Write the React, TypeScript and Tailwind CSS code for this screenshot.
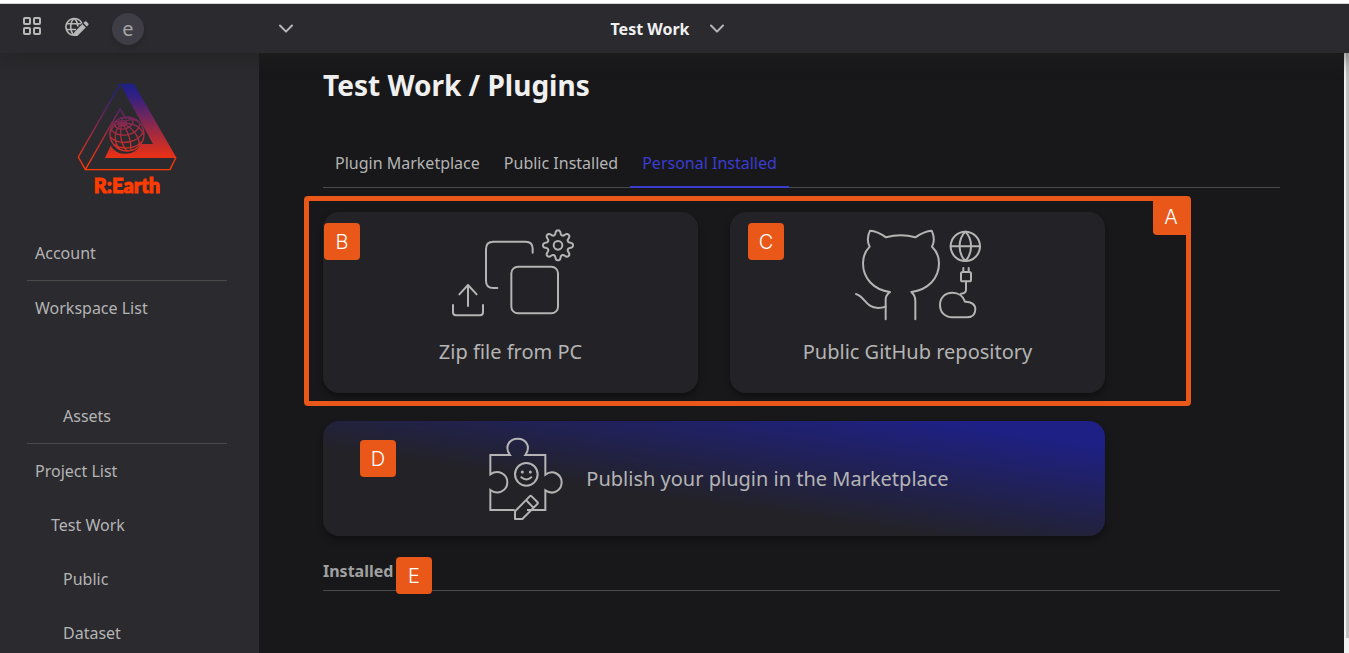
import type { ReactNode } from "react";

function Chevron() {
  return (
    <svg width="14" height="9" viewBox="0 0 14 9" fill="none" stroke="#b8b8b8" strokeWidth="2" strokeLinecap="round" strokeLinejoin="round" aria-hidden="true">
      <path d="M1 1.500 7 7.600 13 1.500" />
    </svg>
  );
}

function GridIcon() {
  return (
    <svg width="18" height="18" viewBox="0 0 18 18" fill="none" stroke="#b8b8b8" strokeWidth="2" aria-hidden="true">
      <rect x="1" y="1" width="6" height="6" rx="1" />
      <rect x="11" y="1" width="6" height="6" rx="1" />
      <rect x="1" y="11" width="6" height="6" rx="1" />
      <rect x="11" y="11" width="6" height="6" rx="1" />
    </svg>
  );
}

function GlobeEditIcon() {
  return (
    <svg width="24" height="20" viewBox="0 0 24 20" fill="none" stroke="#b8b8b8" strokeWidth="1.6" aria-hidden="true">
      <path d="M17 6.500A8.400 8.400 0 1 0 9 18.300" />
      <path d="M9 1.500C4.600 5.500 4.600 14 9 18.200" />
      <path d="M9.400 1.500C11.600 3.600 12.800 6.400 12.900 9.500" />
      <path d="M1.600 6.700H16M1.200 12.500H11" />
      <path d="M9 19v-3.500L17.400 7.100l3.400 3.400L12.300 19z" fill="#b8b8b8" stroke="none" />
      <path d="M18.400 6.100l1.500-1.500a1 1 0 0 1 1.400 0l2 2a1 1 0 0 1 0 1.400l-1.500 1.500z" fill="#b8b8b8" stroke="none" />
    </svg>
  );
}

function Logo() {
  return (
    <svg width="100" height="88" viewBox="51 40 300 264" fill="none" role="img" aria-label="R:Earth logo">
      <defs>
        <linearGradient id="earth" gradientUnits="userSpaceOnUse" x1="0" y1="42" x2="0" y2="301">
          <stop offset="0" stopColor="#1e2086" />
          <stop offset="0.12" stopColor="#2c2085" />
          <stop offset="0.82" stopColor="#e2301a" />
          <stop offset="1" stopColor="#ff3c00" />
        </linearGradient>
      </defs>
      <path d="M180 42H222L348 262V265H135L152 228A52 52 0 0 0 243 223H279Z" fill="url(#earth)" />
      <g stroke="url(#earth)" strokeWidth="4.2">
        <path d="M180 43 55 262 76 300H330L348 263" />
        <path d="M76 300 180 118 198 148" />
        <circle cx="201" cy="193" r="51" />
        <path d="M187 161C163 161 151 178 150 193M187 161C160 180 160 215 179 239M187 161C175 190 184 226 201 244M187 161C202 182 214 212 213 242M187 161C220 174 238 202 238 227M187 161C222 158 246 174 251 196M187 161C205 146 224 148 235 155M187 161C182 149 188 144 196 142M187 161C172 153 163 158 159 164" />
        <ellipse cx="187" cy="161" rx="13" ry="8" />
        <path d="M164 158C158 187 214 184 219 157C219 146 203 144 195 145" />
        <path d="M153 179C171 207 231 201 240 163" />
        <path d="M151 201C172 231 241 220 250 183" />
        <path d="M162 224C184 242 228 237 246 216" />
      </g>
    </svg>
  );
}

const gearPath =
  Array.from({ length: 160 }, (_, i) => {
    const a = (i / 160) * Math.PI * 2;
    const r = 38.5 + 6.5 * (Math.tanh(1.4 * Math.cos(8 * a)) / Math.tanh(1.4));
    return `${i ? "L" : "M"}${(384 + r * Math.cos(a)).toFixed(2)} ${(121 + r * Math.sin(a)).toFixed(2)}`;
  }).join("") + "Z";

const line = {
  fill: "none",
  stroke: "#b4b4b4",
  strokeWidth: 6,
  strokeLinecap: "round" as const,
  strokeLinejoin: "round" as const,
  "aria-hidden": true,
};

function ZipArt() {
  return (
    <svg width="128" height="92" viewBox="51 72 384 276" {...line}>
      <path d="M308 143V131Q308 110 287 110H190Q168 110 168 132V227Q168 249 190 249H202" />
      <rect x="244" y="185" width="140" height="140" rx="20" />
      <path d="M114 303V240M88 268 114 240 140 268M69 300V322Q69 331 78 331H150Q159 331 159 322V300" />
      <path d={gearPath} />
      <circle cx="384" cy="121" r="13" />
    </svg>
  );
}

function GithubArt() {
  return (
    <svg width="128" height="92" viewBox="42 42 384 276" {...line}>
      <path d="M137 313V253Q137 241 150 231C101 225 69 190 69 145C69 125 76 108 89 95C82 82 82 64 90 47C108 48 123 56 138 67Q182 55 226 67C242 56 258 48 275 47C283 64 283 82 276 95C290 108 297 125 297 145C297 190 264 225 214 231Q226 241 226 257V313" />
      <path d="M48 237C75 245 78 279 114 279Q126 279 137 275" />
      <circle cx="376" cy="94" r="44" />
      <path d="M332 94H420M376 50C353 73 353 115 376 138M376 50C399 73 399 115 376 138" />
      <rect x="363" y="171" width="30" height="28" rx="5" />
      <path d="M370 170V159M386 170V159M378 200V224Q378 235 363 236" />
      <path d="M337 307H381C398 307 406 296 406 283C406 269 394 259 375 260C370 243 355 233 337 233C315 233 300 248 300 270C300 292 315 307 337 307Z" />
    </svg>
  );
}

function PuzzleArt() {
  return (
    <svg width="84" height="83" viewBox="30 36 252 249" {...line} strokeLinejoin="miter" strokeLinecap="butt">
      <path d="M137 255H64V195C87 212 115 197 115 172C115 147 87 132 64 148V90H123C106 67 119 41 146 41C173 41 186 67 169 90H229V149C252 132 278 149 278 172C278 197 252 212 229 196V255H174" />
      <circle cx="172" cy="148" r="34" />
      <path d="M157 157Q172 170 187 157" strokeLinecap="round" />
      <circle cx="160" cy="141" r="4.500" fill="#b4b4b4" stroke="none" />
      <circle cx="184" cy="141" r="4.500" fill="#b4b4b4" stroke="none" />
      <path d="M138 282V259L182 214Q185 211 188 214L205 231Q208 234 205 237L160 282ZM171 225 193 248" strokeLinejoin="round" />
    </svg>
  );
}

function Badge({ children, className }: { children: ReactNode; className: string }) {
  return (
    <span className={`absolute flex h-[37px] w-9 items-center justify-center rounded bg-[#e95719] font-[Inter,sans-serif] text-xl font-light text-white ${className}`}>
      {children}
    </span>
  );
}

function SideLink({ children, className }: { children: ReactNode; className: string }) {
  return (
    <a href="#" className={`flex h-[54px] items-center ${className}`}>
      {children}
    </a>
  );
}

const card = "relative rounded-2xl bg-[#232226] text-xl leading-[30px] shadow-[0_4px_6px_rgba(0,0,0,0.35)]";

export default function App() {
  return (
    <div className="flex h-screen flex-col overflow-hidden bg-[#18181a] font-['Noto_Sans',sans-serif] text-base leading-6 text-[#b4b4b4]">
      <div className="relative z-20 h-1 shrink-0 border-b border-[#d5d5d5] bg-white" />
      <header className="z-10 grid h-[49px] shrink-0 grid-cols-[1fr_auto_1fr] items-center bg-[#2b2a2f] pr-[15px] shadow-[0_4px_20px_rgba(32,32,32,0.8)]">
        <div className="flex items-center pl-[23px]">
          <button aria-label="Dashboard" className="pb-1.5"><GridIcon /></button>
          <button aria-label="Edit globe" className="ml-6 pb-1"><GlobeEditIcon /></button>
          <button aria-label="Workspace" className="ml-[23px] flex items-center">
            <span className="flex size-8 items-center justify-center rounded-full bg-[#3f3d45] text-xl text-[#a5a5a5] shadow-md">e</span>
            <span className="ml-[135px]"><Chevron /></span>
          </button>
        </div>
        <button className="flex items-center gap-5 font-bold text-[#f0f0f0]">
          Test Work
          <Chevron />
        </button>
      </header>
      <div className="flex min-h-0 flex-1">
        <nav className="w-[259px] shrink-0 overflow-hidden bg-[#2b2a2f] px-[27px]">
          <div className="flex w-[200px] flex-col items-center pt-[30px] pb-[26px]">
            <Logo />
            <span className="font-[Lato,sans-serif] text-xl leading-[29px] font-black text-[#ff3c00] [-webkit-text-stroke:1px_#ff3c00]">R:Earth</span>
          </div>
          <div className="w-[200px]">
            <SideLink className="pl-2">Account</SideLink>
            <hr className="border-[#4a4a4a]" />
            <SideLink className="pl-2">Workspace List</SideLink>
            <div className="h-[54px]" />
            <SideLink className="pl-9">Assets</SideLink>
            <hr className="border-[#4a4a4a]" />
            <SideLink className="pl-2">Project List</SideLink>
            <SideLink className="pl-6">Test Work</SideLink>
            <SideLink className="pl-9">Public</SideLink>
            <SideLink className="pl-9">Dataset</SideLink>
          </div>
        </nav>
        <main className="min-w-0 flex-1 px-16 pt-[11px]">
          <h1 className="text-[28px] leading-[42px] font-bold text-[#f0f0f0]">Test Work / Plugins</h1>
          <div role="tablist" className="mt-[33px] flex border-b border-[#4a4a4a]">
            <button role="tab" aria-selected="false" className="h-12 px-3">Plugin Marketplace</button>
            <button role="tab" aria-selected="false" className="h-12 px-3">Public Installed</button>
            <button role="tab" aria-selected="true" className="-mb-px h-[49px] border-b-2 border-[#3b3cd0] px-3 text-[#3b3cd0]">Personal Installed</button>
          </div>
          <div className="max-w-[782px]">
            <div className="relative mt-6 grid grid-cols-2 gap-8">
              <button className={`${card} flex flex-col items-center gap-4 pt-[17px] pb-[26px]`}>
                <ZipArt />
                Zip file from PC
                <Badge className="top-[11px] left-px">B</Badge>
              </button>
              <button className={`${card} flex flex-col items-center gap-4 pt-[17px] pb-[26px]`}>
                <GithubArt />
                Public GitHub repository
                <Badge className="top-[11px] left-[18px]">C</Badge>
              </button>
              <div className="pointer-events-none absolute -top-4 -right-[86px] -bottom-[13px] -left-[19px] rounded border-[5px] border-[#e95719]">
                <Badge className="-top-[3px] -right-[3px]">A</Badge>
              </div>
            </div>
            <button className={`${card} mt-7 flex w-full items-center justify-center gap-[23px] bg-[linear-gradient(to_top_right,#232226_38%,#1e2086_90%)] py-4`}>
              <PuzzleArt />
              Publish your plugin in the Marketplace
              <Badge className="top-[19px] left-[37px]">D</Badge>
            </button>
          </div>
          <h2 className="relative mt-[23px] border-b border-[#4a4a4a] pb-[7px] font-bold text-[#a0a0a0]">
            Installed
            <Badge className="-top-0.5 left-[73px]">E</Badge>
          </h2>
        </main>
        <div className="flex w-[5px] shrink-0 bg-[#f1f1f1] pb-[15px] pl-0.5">
          <div className="flex-1 bg-[#c1c1c1]" />
        </div>
      </div>
    </div>
  );
}
